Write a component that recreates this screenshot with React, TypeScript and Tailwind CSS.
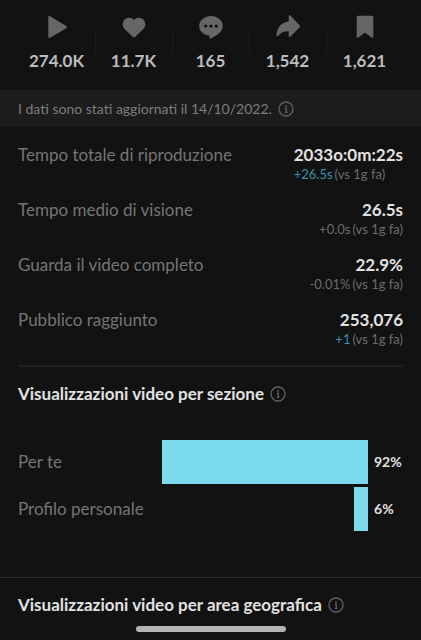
import type { ReactNode } from "react";

const stats = [
  {
    name: "Visualizzazioni",
    value: "274.0K",
    icon: <path d="M3.3 2.400v19.200c0 1 .9 1.600 1.800 1.100l16.100-9.500c.9-.5.9-1.800 0-2.300L5.100 1.300c-.9-.5-1.800.1-1.800 1.100z" />,
  },
  {
    name: "Mi piace",
    value: "11.7K",
    icon: <path d="M12 22.6c-.4 0-.8-.2-1.1-.5L2.6 14C.4 11.800.1 8.400 1.600 5.900 3.900 2.100 9.200 1.800 12 5.200c2.800-3.400 8.100-3.100 10.400.7 1.500 2.500 1.200 5.900-1 8.100l-8.300 8.100c-.3.300-.7.500-1.100.5z" />,
  },
  {
    name: "Commenti",
    value: "165",
    icon: (
      <path
        fillRule="evenodd"
        d="M12 1C5.500 1 .2 5.400.2 11c0 5.300 4.600 9.300 10.300 9.600v2.100c0 .7.700 1.100 1.300.8C18 20.600 23.800 16.600 23.800 11 23.800 5.400 18.500 1 12 1zM6.700 9.400a1.700 1.700 0 1 1 0 3.400 1.700 1.700 0 0 1 0-3.400zm5.300 0a1.700 1.700 0 1 1 0 3.400 1.700 1.700 0 0 1 0-3.400zm5.300 0a1.700 1.700 0 1 1 0 3.400 1.700 1.700 0 0 1 0-3.400z"
      />
    ),
  },
  {
    name: "Condivisioni",
    value: "1,542",
    icon: <path d="M12.700 1.200c0-1 1.100-1.400 1.800-.7l9.200 9.900c.5.600.5 1.300 0 1.900l-9.200 9.300c-.7.700-1.800.3-1.800-.7v-4.700c-4.700-.1-7.800 1.300-10.500 4.700-.6.700-1.700.4-1.700-.6C.7 12.900 5 7.400 12.700 6.500z" />,
  },
  {
    name: "Salvati",
    value: "1,621",
    icon: <path d="M5.500.8h13c1 0 1.800.8 1.800 1.800v19.200c0 .8-.8 1.200-1.500.8L12 17.800l-6.800 4.800c-.7.400-1.500 0-1.500-.8V2.600C3.700 1.600 4.500.8 5.500.8z" />,
  },
];

const metrics = [
  { label: "Tempo totale di riproduzione", value: "2033o:0m:22s", delta: "+26.5s", up: true },
  { label: "Tempo medio di visione", value: "26.5s", delta: "+0.0s", up: false },
  { label: "Guarda il video completo", value: "22.9%", delta: "-0.01%", up: false },
  { label: "Pubblico raggiunto", value: "253,076", delta: "+1", up: true },
];

const sections = [
  { label: "Per te", percent: 92, bar: "100%" },
  { label: "Profilo personale", percent: 6, bar: "7%" },
];

function InfoButton() {
  return (
    <button type="button" aria-label="Informazioni" className="shrink-0 text-[#606060]">
      <svg viewBox="0 0 16 16" className="size-4" fill="none" stroke="currentColor" strokeWidth="1.300">
        <circle cx="8" cy="8" r="7" />
        <path d="M7 7.200H8.200V11.200M6.900 11.300H9.400" />
        <circle cx="8" cy="4.900" r=".9" fill="currentColor" stroke="none" />
      </svg>
    </button>
  );
}

function SectionTitle({ children }: { children: ReactNode }) {
  return (
    <div className="flex items-center gap-[6px]">
      <h2 className="text-[17px] leading-6 font-bold text-[#e2e2e2]">{children}</h2>
      <InfoButton />
    </div>
  );
}

export default function App() {
  return (
    <main className="min-h-screen bg-[#121212] pb-2 font-['Lato','Liberation_Sans',sans-serif]">
      <ul className="grid grid-cols-5 px-[18px] pt-[15px] pb-[17px]">
        {stats.map((s, i) => (
          <li key={s.name} className="relative flex flex-col items-center gap-[10px]">
            <svg viewBox="0 0 24 24" className="size-6 text-[#666]" fill="currentColor" role="img" aria-label={s.name}>
              {s.icon}
            </svg>
            <span className="text-[17px] leading-6 font-bold text-[#bdbdbd]">{s.value}</span>
            {i > 0 && <span className="absolute top-4 left-0 h-[22px] w-px bg-[#1e1e1e]" />}
          </li>
        ))}
      </ul>

      <div className="flex h-[37px] items-center gap-[6px] bg-[#1c1c1c] px-[18px]">
        <p className="text-[14px] leading-5 text-[#7c7c7c]">I dati sono stati aggiornati il 14/10/2022.</p>
        <InfoButton />
      </div>

      <dl className="mx-[18px] border-b-2 border-[#202020] pt-4 pb-[2px]">
        {metrics.map(m => (
          <div key={m.label} className="flex h-[55px] items-start justify-between">
            <dt className="text-[17px] leading-6 text-[#757575]">{m.label}</dt>
            <dd>
              <div className="text-right text-[17px] leading-6 font-bold text-[#e2e2e2]">{m.value}</div>
              <div className={`flex gap-[2px] text-[13px] leading-[14px] text-[#6c6c6c] ${m.value.length > 8 ? "" : "justify-end"}`}>
                <span className={m.up ? "text-[#3b8fad]" : ""}>{m.delta}</span>
                <span>(vs 1g fa)</span>
              </div>
            </dd>
          </div>
        ))}
      </dl>

      <section className="px-[18px] pt-[15px] pb-[46px]">
        <SectionTitle>Visualizzazioni video per sezione</SectionTitle>
        <div className="mt-[34px] flex flex-col gap-[3px]">
          {sections.map(s => (
            <div key={s.label} className="flex h-11 items-center">
              <span className="w-36 shrink-0 text-[17px] leading-6 text-[#757575]">{s.label}</span>
              <div className="flex h-full flex-1 justify-end">
                <div className="h-full bg-[#7bdaec]" style={{ width: s.bar }} />
              </div>
              <span className="w-[35px] shrink-0 pl-[6px] text-[14px] leading-5 font-bold text-[#e2e2e2]">
                {s.percent}%
              </span>
            </div>
          ))}
        </div>
      </section>

      <section className="border-t border-[#2a2a2a] px-[18px] pt-[15px]">
        <SectionTitle>Visualizzazioni video per area geografica</SectionTitle>
      </section>
      <div className="mx-auto mt-[9px] h-[6px] w-[150px] rounded-full bg-[#b4b4b4]" />
    </main>
  );
}
